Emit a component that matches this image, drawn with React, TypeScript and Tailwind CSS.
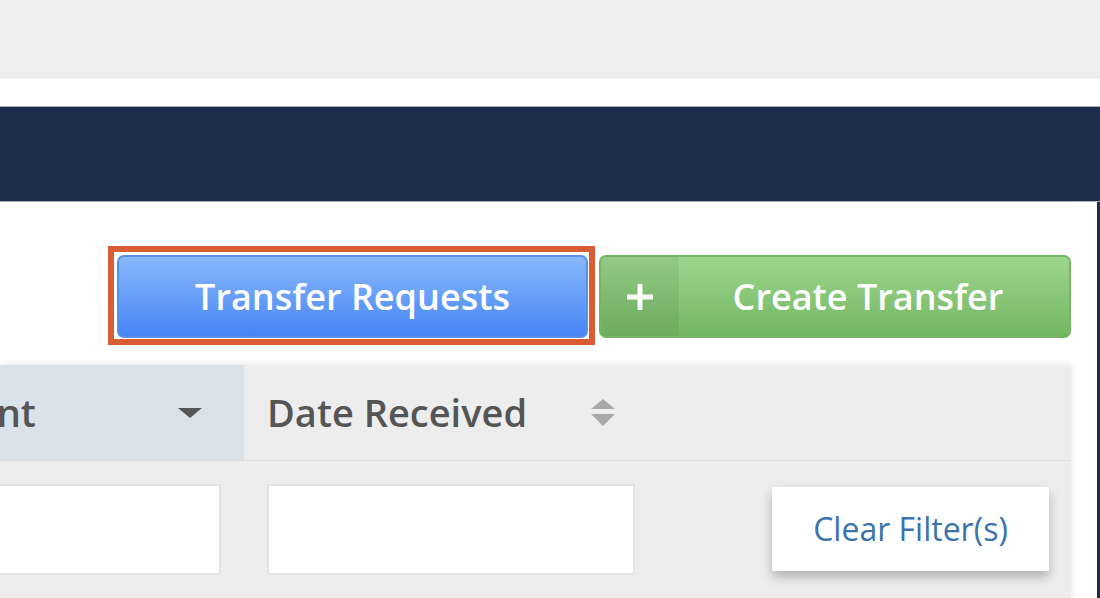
import React from 'react';

function PlusIcon() {
  return (
    <svg width="26" height="26" viewBox="0 0 26 26">
      <rect x="10.5" y="0" width="5" height="26" fill="#ffffff" />
      <rect x="0" y="10.5" width="26" height="5" fill="#ffffff" />
    </svg>
  );
}

function Caret() {
  return (
    <svg width="24" height="10" viewBox="0 0 24 10">
      <polygon points="0,0 24,0 12,10" fill="#555555" />
    </svg>
  );
}

function SortIcon() {
  return (
    <svg width="24" height="28" viewBox="0 0 24 28">
      <polygon points="12,0 24,10 0,10" fill="#a8a8a8" />
      <polygon points="0,15 24,15 12,27" fill="#a8a8a8" />
    </svg>
  );
}

export default function App() {
  return (
    <div className="w-[1100px] h-[598px] overflow-hidden bg-white font-['Open_Sans',sans-serif]">
      {/* Top bars */}
      <div className="h-[79px] bg-[#eeeeee] border-b border-[#f4f4f4]" />
      <div className="h-[27px] bg-white" />
      <div className="h-[96px] bg-[#1b2d4b] border-y border-[#aab0ba]" />

      {/* Content */}
      <div className="h-[397px] border-r-[3px] border-[#1b2d4b] pr-[26px]">
        {/* Actions */}
        <div className="flex justify-end gap-[11px] pt-[53px]">
          <button className="relative w-[471px] h-[83px] rounded-[7px] border-2 border-[#5a8fe8] bg-linear-to-b from-[#88b8fb] to-[#4684f4] text-white text-[36px] font-semibold">
            Transfer Requests
            <span className="pointer-events-none absolute -left-[11px] -top-[11px] -right-[9px] -bottom-[9px] border-[6px] border-[#d95c35]" />
          </button>
          <button className="flex w-[472px] h-[83px] rounded-[7px] overflow-hidden border-2 border-[#74b664] bg-linear-to-b from-[#9dd68d] to-[#72b763] text-white text-[36px] font-semibold">
            <span className="flex items-center justify-center w-[78px] h-full bg-black/[0.06]">
              <PlusIcon />
            </span>
            <span className="flex-1 flex items-center justify-center pr-[12px]">Create Transfer</span>
          </button>
        </div>

        {/* Table */}
        <div className="mt-[27px] shadow-[0_0_8px_rgba(0,0,0,0.12)]">
          <div className="flex h-[96px] border-b border-[#e0e0e0] bg-[#ededed] text-[38px] font-semibold text-[#555555]">
            <div className="flex w-[244px] items-center justify-between overflow-hidden bg-[#dae2ea] pr-[42px]">
              <span className="-ml-[112px] whitespace-nowrap">Amount</span>
              <Caret />
            </div>
            <div className="flex w-[414px] items-center justify-between pl-[23px] pr-[43px]">
              <span className="whitespace-nowrap">Date Received</span>
              <SortIcon />
            </div>
            <div className="flex-1" />
          </div>
          <div className="flex items-center h-[140px] pb-[4px] bg-[#ededed]">
            <div className="w-[244px] pr-[23px]">
              <div className="-ml-[4px] h-[91px] bg-white border-2 border-[#e4e4e4]" />
            </div>
            <div className="w-[414px] px-[23px]">
              <div className="h-[91px] bg-white border-2 border-[#e4e4e4]" />
            </div>
            <div className="flex-1 flex justify-end pr-[22px]">
              <button className="w-[277px] h-[84px] bg-white text-[32px] text-[#3a73ad] shadow-[0_6px_10px_rgba(0,0,0,0.25)]">
                Clear Filter(s)
              </button>
            </div>
          </div>
        </div>
      </div>
    </div>
  );
}
